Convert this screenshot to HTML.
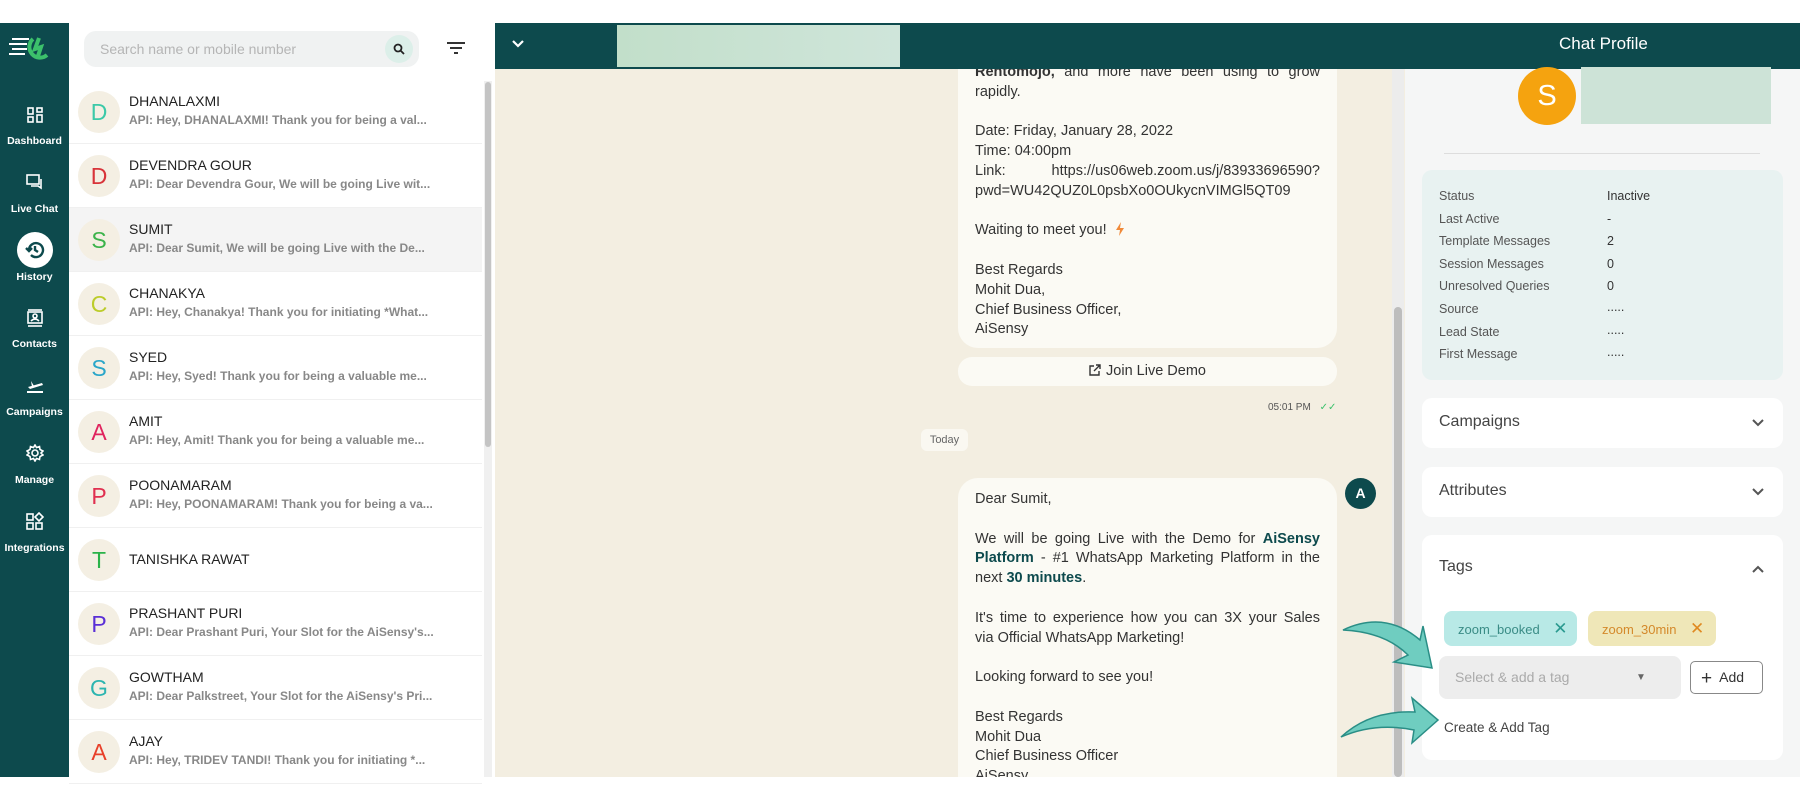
<!DOCTYPE html>
<html><head><meta charset="utf-8"><style>
*{box-sizing:border-box;margin:0;padding:0}
body{width:1800px;height:800px;overflow:hidden;background:#fff;font-family:"Liberation Sans",sans-serif;position:relative}
.abs{position:absolute}
#side{left:0;top:23px;width:69px;height:754px;background:#0d4a4d}
.ic{position:absolute;left:0;width:69px;text-align:center}
.lb{position:absolute;left:0;width:69px;text-align:center;color:#fff;font-size:10.5px;font-weight:bold}
#list{left:69px;top:23px;width:426px;height:754px;background:#fff}
.row{position:absolute;left:0;width:413px;height:64px;border-bottom:1px solid #f0f0f0}
.av{position:absolute;left:9px;top:11px;width:42px;height:42px;border-radius:50%;background:#f4efe3;font-size:23px;text-align:center;line-height:42px}
.nm{position:absolute;left:60px;top:13px;font-size:14px;color:#222}
.pv{position:absolute;left:60px;top:33px;font-size:12px;color:#888;font-weight:bold;white-space:nowrap}
#chat{left:495px;top:69px;width:910px;height:708px;background:#f3eee1;overflow:hidden}
.bub{position:absolute;left:463px;width:379px;background:#fbfaf4;border-radius:20px;padding:0 17px;font-size:14.5px;line-height:19.8px;color:#333;text-align:justify}
.bub b{color:#0d4a4d}
#right{left:1405px;top:69px;width:395px;height:708px;background:#f5f6f6}
.card{position:absolute;left:17px;width:361px;background:#fff;border-radius:10px}
.ct{position:absolute;left:17px;font-size:16px;color:#444}
.lbl{position:absolute;left:34px;font-size:12.5px;color:#555}
.val{position:absolute;left:202px;font-size:12.5px;color:#333}
</style></head><body>

<div id="side" class="abs">
 <svg class="abs" style="left:9px;top:12px" width="44" height="26" viewBox="0 0 44 26"><g stroke="#fff" stroke-width="2"><line x1="3" y1="4" x2="20" y2="4"/><line x1="0" y1="9" x2="18" y2="9"/><line x1="3" y1="14" x2="18" y2="14"/><line x1="0" y1="19" x2="16" y2="19"/></g><path d="M24 4 A10 10 0 1 0 38 20 M30 3 L26 14 L32 12 L28 24" stroke="#3cc16b" stroke-width="4" fill="none"/></svg>
 <div class="ic" style="top:84px"><svg width="16" height="16" viewBox="0 0 16 16" fill="none" stroke="#fff" stroke-width="1.6"><rect x="1" y="1" width="5" height="6"/><rect x="10" y="1" width="5" height="4"/><rect x="1" y="10" width="5" height="5"/><rect x="10" y="8" width="5" height="7"/></svg></div>
 <div class="lb" style="top:112px">Dashboard</div>
 <div class="ic" style="top:151px"><svg width="18" height="16" viewBox="0 0 18 16" fill="none" stroke="#fff" stroke-width="1.6"><rect x="1" y="1" width="12" height="9"/><path d="M15 5 V14 L12 12 H5"/></svg></div>
 <div class="lb" style="top:180px">Live Chat</div>
 <div class="ic" style="top:209px"><div style="width:36px;height:36px;border-radius:50%;background:#fff;margin:0 auto;padding-top:8px"><svg width="20" height="20" viewBox="0 0 20 20" fill="none" stroke="#0d4a4d" stroke-width="2.4"><path d="M4 10 A7 7 0 1 1 6 15"/><path d="M1 8 L4 11 L7 8"/><path d="M10 6 V10 L13 12"/></svg></div></div>
 <div class="lb" style="top:248px">History</div>
 <div class="ic" style="top:286px"><svg width="16" height="18" viewBox="0 0 16 18" fill="none" stroke="#fff" stroke-width="1.6"><rect x="1" y="3" width="14" height="11"/><line x1="1" y1="17" x2="15" y2="17"/><line x1="1" y1="1" x2="15" y2="1"/><circle cx="8" cy="7" r="2"/><path d="M4 12 Q8 8 12 12"/></svg></div>
 <div class="lb" style="top:315px">Contacts</div>
 <div class="ic" style="top:355px"><svg width="18" height="16" viewBox="0 0 18 16" fill="#fff"><path d="M2 9 L16 5 L17 7 L4 11 Z M5 3 L8 8 L6 9 Z"/><rect x="1" y="13" width="16" height="2"/></svg></div>
 <div class="lb" style="top:383px">Campaigns</div>
 <div class="ic" style="top:421px"><svg width="18" height="18" viewBox="0 0 18 18" fill="none" stroke="#fff" stroke-width="1.6"><circle cx="9" cy="9" r="3"/><path d="M9 1 L10.5 3.5 L13.5 2.5 L14 5.5 L17 7 L15 9 L17 11 L14 12.5 L13.5 15.5 L10.5 14.5 L9 17 L7.5 14.5 L4.5 15.5 L4 12.5 L1 11 L3 9 L1 7 L4 5.5 L4.5 2.5 L7.5 3.5 Z"/></svg></div>
 <div class="lb" style="top:451px">Manage</div>
 <div class="ic" style="top:489px"><svg width="18" height="18" viewBox="0 0 18 18" fill="none" stroke="#fff" stroke-width="1.6"><rect x="1" y="2" width="6" height="6"/><rect x="1" y="11" width="6" height="6"/><rect x="10" y="11" width="6" height="6"/><path d="M13 1 L17 5 L13 9 L9 5 Z"/></svg></div>
 <div class="lb" style="top:519px">Integrations</div>
</div>

<div id="list" class="abs">
 <div class="abs" style="left:15px;top:8px;width:335px;height:36px;border-radius:12px;background:#f0f2f2;font-size:14px;color:#b5b5b5;padding:10px 16px">Search name or mobile number</div>
 <div class="abs" style="left:316px;top:12px;width:28px;height:28px;border-radius:50%;background:#dcefe9"><svg style="position:absolute;left:8px;top:8px" width="12" height="12" viewBox="0 0 12 12" fill="none" stroke="#222" stroke-width="1.8"><circle cx="5" cy="5" r="3.5"/><line x1="7.5" y1="7.5" x2="11" y2="11"/></svg></div>
 <svg class="abs" style="left:377px;top:18px" width="20" height="14" viewBox="0 0 20 14" stroke="#333" stroke-width="2"><line x1="1" y1="2" x2="19" y2="2"/><line x1="4" y1="7" x2="16" y2="7"/><line x1="8" y1="12" x2="12" y2="12"/></svg>
 <div class="abs" style="left:415px;top:58px;width:8px;height:696px;background:#f0f0f0"></div>
 <div class="abs" style="left:416px;top:59px;width:6px;height:365px;background:#c4c4c4;border-radius:3px"></div>
 <div style="position:absolute;top:57px;left:0">
  <div class="row" style="top:0"><div class="av" style="color:#3cc9a8">D</div><div class="nm">DHANALAXMI</div><div class="pv">API: Hey, DHANALAXMI! Thank you for being a val...</div></div>
  <div class="row" style="top:64px"><div class="av" style="color:#d8343a">D</div><div class="nm">DEVENDRA GOUR</div><div class="pv">API: Dear Devendra Gour, We will be going Live wit...</div></div>
  <div class="row" style="top:128px;background:#f4f4f4"><div class="av" style="color:#3bb34a">S</div><div class="nm">SUMIT</div><div class="pv">API: Dear Sumit, We will be going Live with the De...</div></div>
  <div class="row" style="top:192px"><div class="av" style="color:#bccc2a">C</div><div class="nm">CHANAKYA</div><div class="pv">API: Hey, Chanakya! Thank you for initiating *What...</div></div>
  <div class="row" style="top:256px"><div class="av" style="color:#2aa6c9">S</div><div class="nm">SYED</div><div class="pv">API: Hey, Syed! Thank you for being a valuable me...</div></div>
  <div class="row" style="top:320px"><div class="av" style="color:#e0245e">A</div><div class="nm">AMIT</div><div class="pv">API: Hey, Amit! Thank you for being a valuable me...</div></div>
  <div class="row" style="top:384px"><div class="av" style="color:#e03050">P</div><div class="nm">POONAMARAM</div><div class="pv">API: Hey, POONAMARAM! Thank you for being a va...</div></div>
  <div class="row" style="top:448px"><div class="av" style="color:#2bb34a">T</div><div class="nm" style="top:23px">TANISHKA RAWAT</div></div>
  <div class="row" style="top:512px"><div class="av" style="color:#5a2fd6">P</div><div class="nm">PRASHANT PURI</div><div class="pv">API: Dear Prashant Puri, Your Slot for the AiSensy's...</div></div>
  <div class="row" style="top:576px"><div class="av" style="color:#2cb5b0">G</div><div class="nm">GOWTHAM</div><div class="pv">API: Dear Palkstreet, Your Slot for the AiSensy's Pri...</div></div>
  <div class="row" style="top:640px"><div class="av" style="color:#e8402a">A</div><div class="nm">AJAY</div><div class="pv">API: Hey, TRIDEV TANDI! Thank you for initiating *...</div></div>
 </div>
</div>

<div class="abs" style="left:495px;top:23px;width:1305px;height:46px;background:#0d4a4d">
 <svg class="abs" style="left:17px;top:17px" width="12" height="8" viewBox="0 0 12 8" fill="none" stroke="#fff" stroke-width="2.2"><path d="M1 1 L6 6 L11 1"/></svg>
 <div class="abs" style="left:122px;top:2px;width:283px;height:42px;background:linear-gradient(90deg,#c2dfca,#cfe5da)"></div>
 <div class="abs" style="left:1064px;top:11px;font-size:17px;color:#fff">Chat Profile</div>
</div>

<div id="chat" class="abs">
 <div class="bub" style="top:-40px;height:319px;padding-top:34px">
  <b style="color:#333">Rentomojo,</b> and more have been using to grow rapidly.<br><br>
  Date: Friday, January 28, 2022<br>Time: 04:00pm<br>
  <span style="display:flex;justify-content:space-between"><span>Link:</span><span>https://us06web.zoom.us/j/83933696590?</span></span>
  pwd=WU42QUZ0L0psbXo0OUkycnVIMGl5QT09<br><br>
  Waiting to meet you! <svg width="10" height="14" viewBox="0 0 10 14" style="vertical-align:-2px;margin-left:4px"><path d="M6 0 L1 8 H5 L4 14 L9 6 H5 Z" fill="#f08a3a"/></svg><br><br>
  Best Regards<br>Mohit Dua,<br>Chief Business Officer,<br>AiSensy
 </div>
 <div class="abs" style="left:463px;top:288px;width:379px;height:29px;border-radius:14px;background:#fbfaf4;text-align:center;font-size:14.5px;line-height:29px;color:#333"><svg width="12" height="12" viewBox="0 0 12 12" fill="none" stroke="#333" stroke-width="1.4" style="vertical-align:-1px;margin-right:5px"><path d="M5 2 H1 V11 H10 V7 M7 1 H11 V5 M11 1 L5 7"/></svg>Join Live Demo</div>
 <div class="abs" style="left:773px;top:333px;font-size:10px;color:#555">05:01 PM <span style="color:#3cc16b;margin-left:6px">&#10003;&#10003;</span></div>
 <div class="abs" style="left:426px;top:360px;width:47px;height:22px;border-radius:6px;background:#faf8f1;font-size:11px;color:#666;text-align:center;line-height:22px">Today</div>
 <div class="bub" style="top:409px;height:320px;padding-top:12px">
  Dear Sumit,<br><br>
  We will be going Live with the Demo for <b>AiSensy Platform</b> - #1 WhatsApp Marketing Platform in the next <b>30 minutes</b>.<br><br>
  <span style="display:block;text-align:justify;text-align-last:justify">It's time to experience how you can 3X your Sales</span>via Official WhatsApp Marketing!<br><br>
  Looking forward to see you!<br><br>
  Best Regards<br>Mohit Dua<br>Chief Business Officer<br>AiSensy
 </div>
 <div class="abs" style="left:850px;top:409px;width:31px;height:31px;border-radius:50%;background:#0d4a4d;color:#fff;font-size:14px;font-weight:bold;text-align:center;line-height:31px">A</div>
 <div class="abs" style="left:897px;top:0;width:12px;height:708px;background:#ececec"></div>
 <div class="abs" style="left:899px;top:238px;width:8px;height:470px;background:#bdbdbd;border-radius:4px"></div>
</div>

<div id="right" class="abs">
 <div class="abs" style="left:113px;top:-2px;width:58px;height:58px;border-radius:50%;background:#f5a30f;color:#fff;font-size:29px;text-align:center;line-height:58px">S</div>
 <div class="abs" style="left:176px;top:-2px;width:190px;height:57px;background:#cde3d7"></div>
 <div class="abs" style="left:39px;top:84px;width:316px;height:1px;background:#ddd"></div>
 <div class="abs" style="left:17px;top:101px;width:361px;height:210px;background:#e8f2f1;border-radius:10px"></div>
 <div class="lbl" style="top:120px">Status</div><div class="val" style="top:120px">Inactive</div>
 <div class="lbl" style="top:143px">Last Active</div><div class="val" style="top:143px">-</div>
 <div class="lbl" style="top:165px">Template Messages</div><div class="val" style="top:165px">2</div>
 <div class="lbl" style="top:188px">Session Messages</div><div class="val" style="top:188px">0</div>
 <div class="lbl" style="top:210px">Unresolved Queries</div><div class="val" style="top:210px">0</div>
 <div class="lbl" style="top:233px">Source</div><div class="val" style="top:231px">.....</div>
 <div class="lbl" style="top:256px">Lead State</div><div class="val" style="top:254px">.....</div>
 <div class="lbl" style="top:278px">First Message</div><div class="val" style="top:276px">.....</div>

 <div class="card" style="top:329px;height:50px"><div class="ct" style="top:15px">Campaigns</div><svg class="abs" style="left:330px;top:21px" width="12" height="8" viewBox="0 0 12 8" fill="none" stroke="#555" stroke-width="2"><path d="M1 1 L6 6 L11 1"/></svg></div>
 <div class="card" style="top:398px;height:50px"><div class="ct" style="top:15px">Attributes</div><svg class="abs" style="left:330px;top:21px" width="12" height="8" viewBox="0 0 12 8" fill="none" stroke="#555" stroke-width="2"><path d="M1 1 L6 6 L11 1"/></svg></div>
 <div class="card" style="top:466px;height:225px">
  <div class="ct" style="top:23px">Tags</div><svg class="abs" style="left:330px;top:30px" width="12" height="8" viewBox="0 0 12 8" fill="none" stroke="#555" stroke-width="2"><path d="M1 7 L6 2 L11 7"/></svg>
  <div class="abs" style="left:22px;top:76px;width:133px;height:35px;border-radius:8px;background:#b8e9e6;color:#3a8c86;font-size:13px;line-height:35px;padding-left:14px">zoom_booked <span style="font-size:17px;margin-left:10px;color:#2b9a90">&#10005;</span></div>
  <div class="abs" style="left:166px;top:76px;width:128px;height:35px;border-radius:8px;background:#efe7b8;color:#d4892a;font-size:13px;line-height:35px;padding-left:14px">zoom_30min <span style="font-size:17px;margin-left:10px;color:#e08a22">&#10005;</span></div>
  <div class="abs" style="left:17px;top:121px;width:242px;height:43px;border-radius:8px;background:#ededed;color:#aaa;font-size:14px;line-height:43px;padding-left:16px">Select &amp; add a tag<span style="position:absolute;left:197px;top:0;font-size:10px;color:#666">&#9660;</span></div>
  <div class="abs" style="left:268px;top:126px;width:73px;height:33px;border-radius:5px;border:1px solid #888;font-size:14px;line-height:31px;color:#333;padding-left:10px"><span style="font-size:19px;vertical-align:-2px">+</span>&nbsp; Add</div>
  <div class="abs" style="left:22px;top:185px;font-size:13.5px;color:#444">Create &amp; Add Tag</div>
 </div>
</div>

<svg class="abs" style="left:1330px;top:600px" width="120" height="160" viewBox="0 0 120 160">
 <path d="M13 30 Q55 10 90 40 L93 26 L102 68 L64 62 L78 55 Q55 32 13 30 Z" fill="#6fcdc0" stroke="#2a8e86" stroke-width="1.5"/>
 <path d="M11 137 Q40 110 85 112 L82 98 L108 120 L82 143 L84 130 Q45 122 11 137 Z" fill="#6fcdc0" stroke="#2a8e86" stroke-width="1.5"/>
</svg>
</body></html>
